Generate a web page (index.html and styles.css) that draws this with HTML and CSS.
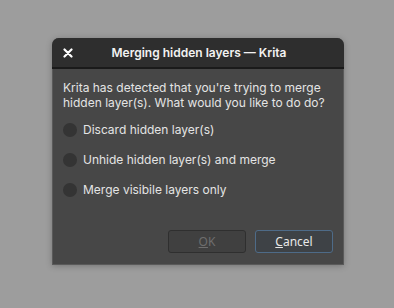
FILE: index.html
```html
<!DOCTYPE html>
<html lang="en">

<head>
    <meta charset="UTF-8">
    <title>Merging hidden layers — Krita</title>
    <link rel="stylesheet" href="styles.css">
</head>

<body>
    <div class="dialog">
        <div class="titlebar">
            <span class="close">
                <svg width="10" height="10" viewBox="0 0 10 10">
                    <path d="M1.5 1.5 L8.5 8.5 M8.5 1.5 L1.5 8.5" stroke="#ffffff" stroke-width="2.2" stroke-linecap="round"/>
                </svg>
            </span>
            <span class="title">Merging hidden layers — Krita</span>
        </div>
        <div class="content">
            <p class="message">Krita has detected that you're trying to merge hidden layer(s). What would you like to do do?</p>
            <div class="options">
                <label class="option"><span class="radio"></span>Discard hidden layer(s)</label>
                <label class="option"><span class="radio"></span>Unhide hidden layer(s) and merge</label>
                <label class="option"><span class="radio"></span>Merge visibile layers only</label>
            </div>
            <div class="buttons">
                <button class="btn disabled"><u>O</u>K</button>
                <button class="btn focused"><u>C</u>ancel</button>
            </div>
        </div>
    </div>
</body>

</html>
```

FILE: styles.css
```css
body {
    margin: 0;
    width: 394px;
    height: 308px;
    background-color: #9d9d9d;
    font-family: Inter, "Noto Sans", sans-serif;
    font-size: 12px;
    color: #e4e4e4;
}

.dialog {
    position: absolute;
    left: 52px;
    top: 38px;
    width: 290px;
    height: 226px;
    background: #474747;
    border: 1px solid #5a5a5a;
    border-top: none;
    border-radius: 7px 7px 0 0;
    box-shadow: 0 1px 6px rgba(0, 0, 0, 0.25);
    display: flex;
    flex-direction: column;
}

.titlebar {
    height: 29px;
    background: #2e2e2e;
    border-bottom: 2px solid #1a1a1a;
    border-radius: 7px 7px 0 0;
    margin: 0 -1px;
    display: flex;
    align-items: center;
    justify-content: center;
    position: relative;
}

.close {
    position: absolute;
    left: 11px;
    top: 10px;
    display: flex;
}

.title {
    font-weight: 600;
    font-size: 12px;
    color: #f2f2f2;
    margin-left: 2px;
}

.content {
    padding: 11px 10px 11px 10px;
    flex: 1;
    display: flex;
    flex-direction: column;
}

.message {
    margin: 0 0 12px 0;
    line-height: 15px;
}

.options {
    display: flex;
    flex-direction: column;
    gap: 15px;
}

.option {
    display: flex;
    align-items: center;
    height: 15px;
}

.radio {
    width: 14px;
    height: 14px;
    border-radius: 50%;
    background: #343434;
    margin-right: 6px;
}

.buttons {
    margin-top: auto;
    display: flex;
    justify-content: flex-end;
    gap: 9px;
}

.btn {
    width: 78px;
    height: 23px;
    border-radius: 3px;
    font-family: "Noto Sans", sans-serif;
    font-size: 12px;
    background: #3c3c3c;
    border: 1px solid #2e2e2e;
    color: #e8e8e8;
}

.btn.disabled {
    color: #6e6e6e;
    background: #404040;
    border-color: #2f2f2f;
}

.btn.focused {
    background: #3e4246;
    border-color: #4e6b88;
}
```
